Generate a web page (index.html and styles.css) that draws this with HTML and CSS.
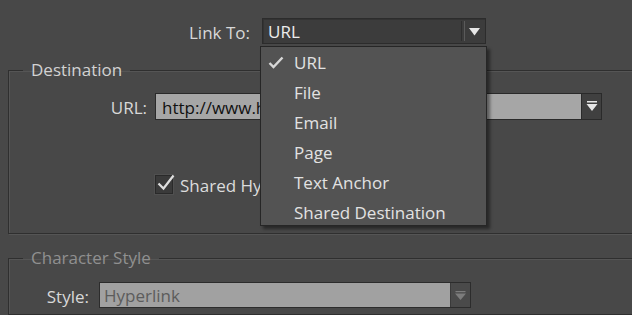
FILE: index.html
```html
<!DOCTYPE html>
<html>
<head>
<meta charset="utf-8">
<link rel="stylesheet" href="styles.css">
</head>
<body>
<div class="dialog">
  <div class="top-row">
    <span class="label link-label">Link To:</span>
    <div class="select dark">
      <span class="value">URL</span>
      <span class="sep"></span>
      <svg class="arrow" width="11" height="8" viewBox="0 0 11 8"><path d="M0 0H11L5.5 7.5Z" fill="#e6e6e6"/></svg>
    </div>
  </div>

  <fieldset class="group dest">
    <legend>Destination</legend>
    <div class="row url-row">
      <span class="label url-label">URL:</span>
      <div class="combo">
        <span class="combo-text">http://www.hyperlink.com/</span>
        <span class="combo-btn">
          <svg width="12" height="11" viewBox="0 0 12 11"><rect x="1" y="0" width="10" height="1.5" fill="#e6e6e6"/><path d="M0.5 3H11.5L6 10Z" fill="#e6e6e6"/></svg>
        </span>
      </div>
    </div>
    <div class="row check-row">
      <span class="checkbox">
        <svg width="22" height="20" viewBox="0 0 22 20"><path d="M3.5 10.5L8.5 15.5L18.5 2.5" fill="none" stroke="#dedede" stroke-width="2.2"/></svg>
      </span>
      <span class="check-text">Shared Hyperlink Destination</span>
    </div>
  </fieldset>

  <fieldset class="group charstyle">
    <legend>Character Style</legend>
    <div class="row style-row">
      <span class="label style-label">Style:</span>
      <div class="style-select">
        <span class="style-text">Hyperlink</span>
        <span class="style-btn">
          <svg width="11" height="9" viewBox="0 0 11 9"><rect x="0.5" y="0" width="10" height="1.2" fill="#7c7c7c"/><path d="M0 2.5H11L5.5 9Z" fill="#7c7c7c"/></svg>
        </span>
      </div>
    </div>
  </fieldset>

  <div class="menu">
    <div class="item checked">
      <svg class="tick" width="16" height="13" viewBox="0 0 16 13"><path d="M1.5 7L5.5 11L14.5 1.5" fill="none" stroke="#d8d8d8" stroke-width="2.4"/></svg>
      <span>URL</span>
    </div>
    <div class="item"><span>File</span></div>
    <div class="item"><span>Email</span></div>
    <div class="item"><span>Page</span></div>
    <div class="item"><span>Text Anchor</span></div>
    <div class="item"><span>Shared Destination</span></div>
  </div>
</div>
</body>
</html>
```

FILE: styles.css
```css
html, body {
  margin: 0;
  padding: 0;
}
body {
  background: #484848;
  width: 632px;
  height: 315px;
  overflow: hidden;
  font-family: "Open Sans", "DejaVu Sans", sans-serif;
  font-size: 17px;
  color: #dcdcdc;
}
.dialog {
  position: relative;
  display: flex;
  flex-direction: column;
  width: 632px;
  height: 315px;
}
.top-row {
  display: flex;
  align-items: center;
  margin-top: 18px;
  height: 26px;
}
.label {
  text-align: right;
  color: #d8d8d8;
  flex: none;
  padding-top: 2px;
}
.link-label {
  width: 250px;
  margin-right: 12px;
}
.select.dark {
  display: flex;
  align-items: center;
  box-sizing: border-box;
  width: 224px;
  height: 26px;
  background: #3c3c3c;
  border: 1px solid #2c2c2c;
  box-shadow: inset 1px 1px 0 #333;
}
.select .value {
  flex: 1;
  padding-left: 5px;
  padding-top: 1px;
  color: #ececec;
}
.select .sep {
  width: 2px;
  height: 20px;
  border-left: 1px solid #2e2e2e;
  border-right: 1px solid #5a5a5a;
  margin-right: 4px;
}
.select .arrow {
  margin-right: 5px;
  margin-top: 1px;
}

.group {
  margin: 0 0 0 8px;
  padding: 0;
  width: 700px;
  border: 1px solid #2f2f2f;
  box-shadow: 1px 1px 0 #555 inset, 1px 1px 0 #555;
  min-width: 0;
}
.group legend {
  margin-left: 14px;
  padding: 0 8px;
  line-height: 20px;
  height: 20px;
  color: #d2d2d2;
}
.dest {
  margin-top: 16px;
  height: 174px;
  box-sizing: border-box;
}
.row {
  display: flex;
  align-items: center;
}
.url-row {
  margin-top: 13px;
}
.url-label {
  width: 138px;
  margin-right: 8px;
}
.combo {
  display: flex;
  box-sizing: border-box;
  width: 447px;
  height: 27px;
  border: 1px solid #2a2a2a;
  background: #a6a6a6;
}
.combo-text {
  flex: 1;
  padding-left: 6px;
  line-height: 27px;
  color: #111;
  overflow: hidden;
  white-space: nowrap;
}
.combo-btn {
  width: 19px;
  display: flex;
  align-items: center;
  justify-content: center;
  background: #404040;
  border-left: 1px solid #2a2a2a;
}
.check-row {
  margin-top: 52px;
  padding-left: 146px;
}
.checkbox {
  position: relative;
  box-sizing: border-box;
  width: 18px;
  height: 19px;
  background: #3a3a3a;
  border: 1px solid #2a2a2a;
  box-shadow: 0 0 0 1px #505050;
  margin-right: 7px;
}
.checkbox svg {
  position: absolute;
  left: -1px;
  top: -3px;
}
.check-text {
  color: #dcdcdc;
  white-space: nowrap;
  padding-top: 2px;
}

.charstyle {
  margin-top: 14px;
  flex: 1;
}
.charstyle legend {
  color: #909090;
}
.style-row {
  margin-top: 14px;
}
.style-label {
  width: 80px;
  margin-right: 10px;
}
.style-select {
  display: flex;
  box-sizing: border-box;
  width: 372px;
  height: 26px;
  border: 1px solid #2c2c2c;
  background: #a1a1a1;
}
.style-text {
  flex: 1;
  padding-left: 4px;
  line-height: 26px;
  color: #5c5c5c;
}
.style-btn {
  width: 19px;
  display: flex;
  align-items: center;
  justify-content: center;
  background: #4a4a4a;
  border-left: 1px solid #3a3a3a;
}

.menu {
  position: absolute;
  left: 260px;
  top: 46px;
  width: 227px;
  height: 180px;
  box-sizing: border-box;
  background: #535353;
  border: 1px solid #262626;
  box-shadow: 3px 3px 3px rgba(0, 0, 0, 0.45);
}
.item {
  position: relative;
  height: 30px;
  line-height: 32px;
  padding-left: 33px;
  color: #e2e2e2;
  white-space: nowrap;
}
.item .tick {
  position: absolute;
  left: 7px;
  top: 9px;
}
```
